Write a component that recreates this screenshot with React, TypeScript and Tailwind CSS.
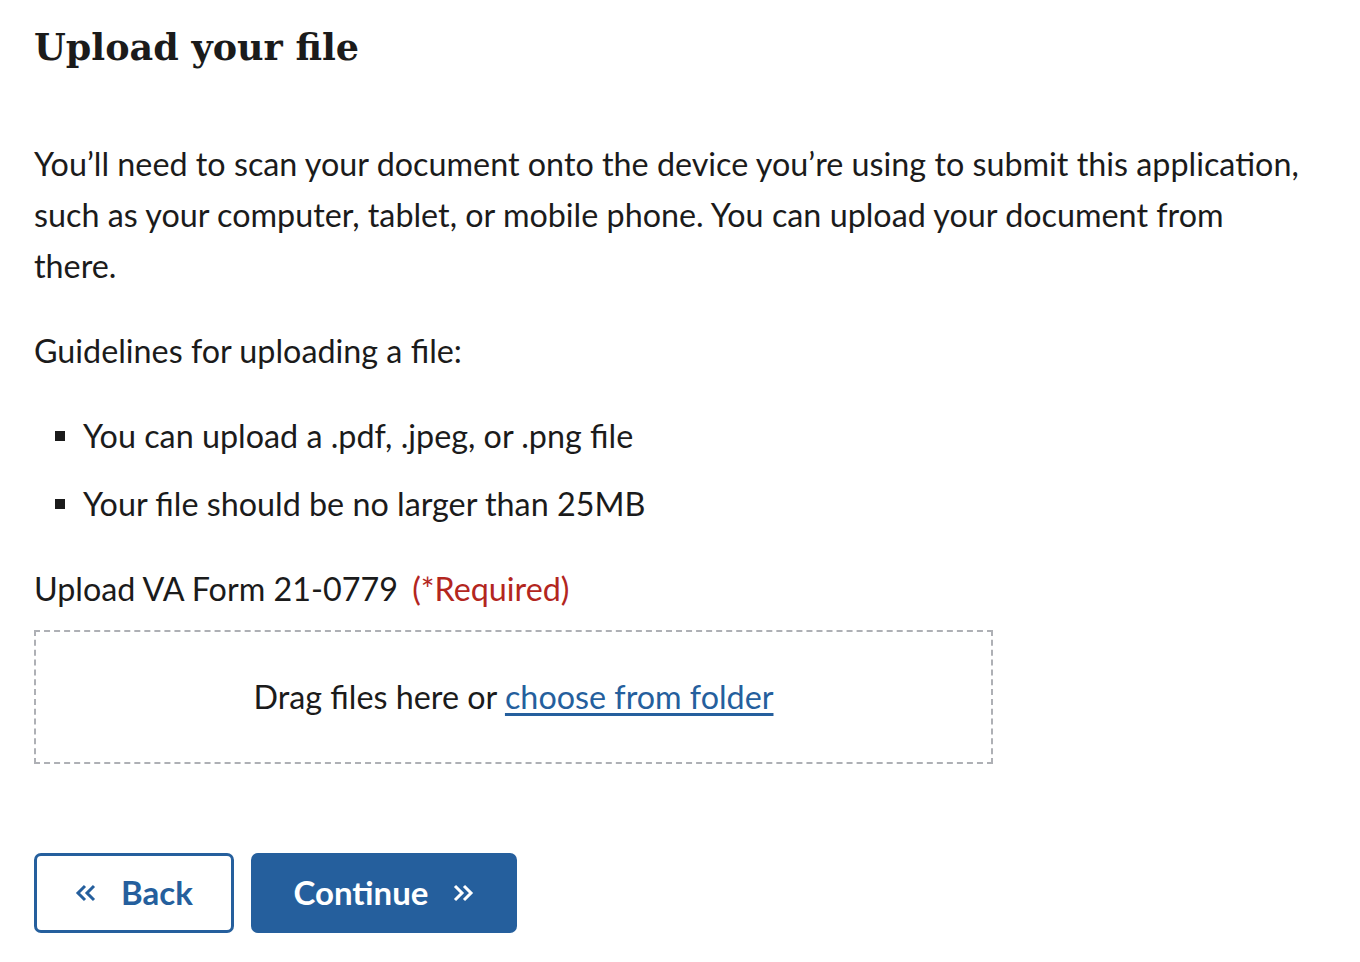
import React from 'react';

function Chevrons({ dir }: { dir: 'left' | 'right' }) {
  const d =
    dir === 'left'
      ? 'M10 2 L3 9 L10 16 M19 2 L12 9 L19 16'
      : 'M3 2 L10 9 L3 16 M12 2 L19 9 L12 16';
  return (
    <svg width="22" height="18" viewBox="0 0 22 18" fill="none" aria-hidden="true">
      <path d={d} stroke="currentColor" strokeWidth="3" strokeLinecap="butt" strokeLinejoin="miter" />
    </svg>
  );
}

export default function App() {
  const body = { fontFamily: 'Lato, "Open Sans", "Liberation Sans", sans-serif' };

  return (
    <div className="min-h-screen bg-white px-[34px] text-[#1b1b1b]" style={body}>
      <h1
        className="pt-[23px] text-[36.5px] font-bold leading-[50px] text-[#1b1b1b]"
        style={{ fontFamily: '"DejaVu Serif", "Liberation Serif", serif' }}
      >
        Upload your file
      </h1>

      <p className="mt-[65px] max-w-[1280px] text-[32.3px] leading-[51px]">
        You’ll need to scan your document onto the device you’re using to submit this application,
        such as your computer, tablet, or mobile phone. You can upload your document from there.
      </p>

      <p className="mt-[34px] text-[32.3px] leading-[51px]">Guidelines for uploading a file:</p>

      <ul className="mt-[34px] flex flex-col gap-[17px] text-[32.3px] leading-[51px]">
        <li className="flex items-center">
          <span className="ml-[21px] mr-[18px] h-[10px] w-[10px] bg-[#1b1b1b]" />
          You can upload a .pdf, .jpeg, or .png file
        </li>
        <li className="flex items-center">
          <span className="ml-[21px] mr-[18px] h-[10px] w-[10px] bg-[#1b1b1b]" />
          Your file should be no larger than 25MB
        </li>
      </ul>

      <label className="mt-[34px] block text-[32.3px] leading-[51px]">
        Upload VA Form 21-0779 <span className="ml-[6px] text-[#b3261e]">(*Required)</span>
      </label>

      <div className="mt-[16px] flex h-[134px] w-[959px] items-center justify-center border-2 border-dashed border-[#aeb0b5] text-[32.3px]">
        <span>
          Drag files here or{' '}
          <a href="#" className="text-[#255f9d] underline decoration-[3px] underline-offset-[4px]">
            choose from folder
          </a>
        </span>
      </div>

      <div className="mt-[89px] flex gap-[17px]">
        <button className="flex h-[80px] w-[200px] items-center justify-center gap-[24px] rounded-[7px] border-[3px] border-[#255f9d] bg-white text-[33px] font-bold text-[#255f9d]">
          <Chevrons dir="left" />
          Back
        </button>
        <button className="flex h-[80px] w-[266px] items-center justify-center gap-[24px] rounded-[7px] bg-[#255f9d] text-[33px] font-bold text-white">
          Continue
          <Chevrons dir="right" />
        </button>
      </div>
    </div>
  );
}
